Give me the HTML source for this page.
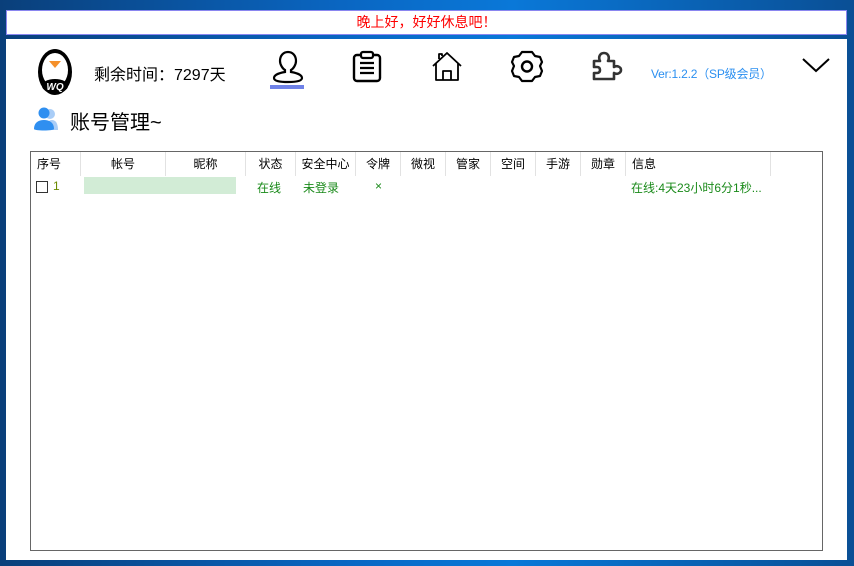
<!DOCTYPE html>
<html><head><meta charset="utf-8"><style>
*{margin:0;padding:0;box-sizing:border-box}
body{width:854px;height:566px;overflow:hidden;position:relative;font-family:"Liberation Sans","Noto Sans CJK SC",sans-serif;background:linear-gradient(90deg,#0a3f7a 0%,#0a66c2 40%,#0a78d8 60%,#0a4f95 100%)}
.banner{position:absolute;left:6px;top:10px;width:841px;height:25px;background:#fff;border:1px solid #8a86f0;color:#f00;font-size:14px;text-align:center;line-height:23px}
.win{position:absolute;left:6px;top:39px;width:841px;height:521px;background:#fff}
.abs{position:absolute}
.tbl{position:absolute;left:30px;top:151px;width:793px;height:400px;border:1px solid #666;background:#fff}
.hd{position:absolute;top:0;height:24px;font-size:12px;line-height:24px;text-align:center;color:#000;border-right:1px solid #e2e2e2}
.cell{position:absolute;top:27px;font-size:12px;color:#1a8a1a;text-align:center}
</style></head><body>
<div class="banner">晚上好，好好休息吧！</div>
<div class="win"></div>
<svg class="abs" style="left:37px;top:47px" width="36" height="50" viewBox="0 0 36 50">
<ellipse cx="18" cy="25" rx="17" ry="23" fill="#000"/>
<ellipse cx="18" cy="23" rx="13" ry="17" fill="#fff"/>
<path d="M12 14 L24 14 L18 21Z" fill="#f5902a"/>
<ellipse cx="18" cy="39" rx="13" ry="7" fill="#000"/>
<text x="18" y="43" font-size="10" font-weight="bold" font-style="italic" fill="#fff" text-anchor="middle" font-family="Liberation Sans">WQ</text>
</svg>
<div class="abs" style="left:94px;top:61px;font-size:16px;color:#000">剩余时间：7297天</div>
<svg class="abs" style="left:270px;top:49px" width="36" height="40" viewBox="0 0 36 40">
<path d="M18 3c5 0 8 4 8 9 0 4-3 8-5 9v2c6 1 11 3 11 6s-6 4-14 4-14-1-14-4 5-5 11-6v-2c-2-1-5-5-5-9 0-5 3-9 8-9z" fill="none" stroke="#000" stroke-width="2.2"/>
<rect x="0" y="36" width="34" height="4" fill="#6f82e8"/>
</svg>
<svg class="abs" style="left:352px;top:50px" width="30" height="33" viewBox="0 0 30 33">
<rect x="2" y="5" width="26" height="26" rx="3" fill="none" stroke="#000" stroke-width="2.4"/>
<rect x="9" y="2" width="12" height="6" rx="2" fill="#fff" stroke="#000" stroke-width="2.2"/>
<path d="M8 13h14M8 18h14M8 23h14" stroke="#000" stroke-width="2.2"/>
</svg>
<svg class="abs" style="left:431px;top:50px" width="32" height="32" viewBox="0 0 32 32">
<path d="M2 16 L16 3 L30 16 M5 13 V30 H27 V13 M12 30 V21 H20 V30 M8 9 V4 H11 V6" fill="none" stroke="#000" stroke-width="1.8" stroke-linejoin="round"/>
</svg>
<svg class="abs" style="left:509px;top:49px" width="36" height="35" viewBox="0 0 36 35">
<path d="M13 3h10l3 4 5 1 2 5-2 4 2 5-2 5-5 1-3 4H13l-3-4-5-1-2-5 2-5-2-4 2-5 5-1z" fill="none" stroke="#000" stroke-width="2.2" stroke-linejoin="round"/>
<circle cx="18" cy="17.5" r="5" fill="none" stroke="#000" stroke-width="2.4"/>
</svg>
<svg class="abs" style="left:591px;top:51px" width="32" height="31" viewBox="0 0 32 31">
<path d="M3 10h6c-2-4 0-8 4-8s6 4 4 8h6v6c3-2 7 0 7 3s-4 5-7 3v6H3v-6h3c2 0 3-1 3-3s-1-3-3-3H3z" fill="none" stroke="#333" stroke-width="2.6" stroke-linejoin="round"/>
</svg>
<div class="abs" style="left:651px;top:65px;font-size:12px;color:#2b8ff0;letter-spacing:-0.2px">Ver:1.2.2（SP级会员）</div>
<svg class="abs" style="left:802px;top:57px" width="28" height="16" viewBox="0 0 28 16"><path d="M1 2 L14 14 L27 2" fill="none" stroke="#000" stroke-width="2"/></svg>
<svg class="abs" style="left:33px;top:106px" width="26" height="26" viewBox="0 0 26 26">
<circle cx="17" cy="8" r="5" fill="#a9cdf7"/><path d="M12 24c0-6 3-10 7-10s6 4 6 10z" fill="#a9cdf7"/>
<circle cx="11" cy="7" r="5.5" fill="#2f8ff0"/><path d="M1 23c0-6 4-9 10-9s10 3 10 9c0 2-20 2-20 0z" fill="#2f8ff0"/>
</svg>
<div class="abs" style="left:70px;top:106px;font-size:20px;color:#000">账号管理~</div>
<div class="tbl">
<div class="hd" style="left:0;width:50px;text-align:left;padding-left:6px">序号</div>
<div class="hd" style="left:50px;width:85px">帐号</div>
<div class="hd" style="left:135px;width:80px">昵称</div>
<div class="hd" style="left:215px;width:50px">状态</div>
<div class="hd" style="left:265px;width:60px">安全中心</div>
<div class="hd" style="left:325px;width:45px">令牌</div>
<div class="hd" style="left:370px;width:45px">微视</div>
<div class="hd" style="left:415px;width:45px">管家</div>
<div class="hd" style="left:460px;width:45px">空间</div>
<div class="hd" style="left:505px;width:45px">手游</div>
<div class="hd" style="left:550px;width:45px">勋章</div>
<div class="hd" style="left:595px;width:145px;text-align:left;padding-left:6px">信息</div>
<div class="abs" style="left:5px;top:29px;width:12px;height:12px;border:1px solid #333"></div>
<div class="cell" style="left:22px;color:#6a8a00">1</div>
<div class="abs" style="left:53px;top:25px;width:152px;height:17px;background:#d2ecd6"></div>
<div class="cell" style="left:213px;width:50px">在线</div>
<div class="cell" style="left:260px;width:60px">未登录</div>
<div class="cell" style="left:325px;width:45px">×</div>
<div class="cell" style="left:600px;text-align:left">在线:4天23小时6分1秒...</div>
</div>
</body></html>
